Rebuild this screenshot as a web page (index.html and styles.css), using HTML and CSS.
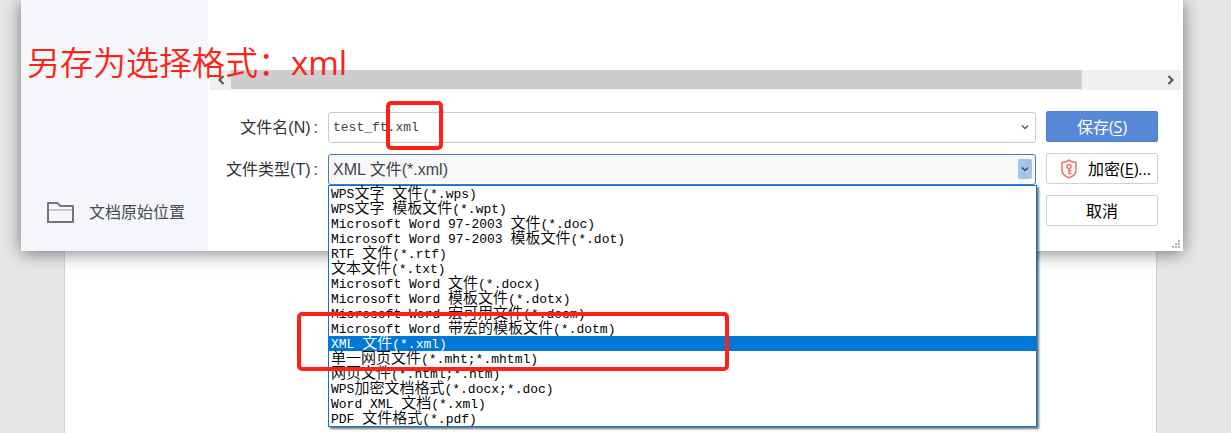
FILE: index.html
```html
<!DOCTYPE html>
<html lang="zh-CN">
<head>
<meta charset="utf-8">
<title>另存为</title>
<link rel="stylesheet" href="styles.css">
</head>
<body>
<main class="dialog">
  <aside class="sidebar">
    <a class="place" href="#">
      <svg class="folder" viewBox="0 0 28 24" width="28" height="24" aria-hidden="true">
        <path d="M1 21V2H10.500L13.500 5H26V21Z" fill="none" stroke="#747678" stroke-width="2" stroke-linejoin="round"/>
        <path d="M2 9H25" stroke="#b8babd" stroke-width="1.5"/>
      </svg>
      <span>文档原始位置</span>
    </a>
  </aside>
  <section class="content">
    <div class="scrollbar">
      <button class="scroll-btn" type="button" aria-label="向左滚动"><svg viewBox="0 0 8 10" width="8" height="10"><path d="M6.5 1L2.5 5L6.5 9" fill="none" stroke="#505050" stroke-width="2"/></svg></button>
      <div class="track"><div class="thumb"></div></div>
      <button class="scroll-btn" type="button" aria-label="向右滚动"><svg viewBox="0 0 8 10" width="8" height="10"><path d="M1.5 1L5.5 5L1.5 9" fill="none" stroke="#505050" stroke-width="2"/></svg></button>
    </div>
    <form class="form">
      <div class="fields">
        <label for="name">文件名(N)<span class="colon">:</span></label>
        <div class="control">
          <input class="box name" id="name" type="text" value="test_ft.xml">
          <span class="drop"><svg viewBox="0 0 8 6" width="8" height="6"><path d="M1 1.5L4 4.5L7 1.5" fill="none" stroke="#606060" stroke-width="1.5"/></svg></span>
          <span class="mark mark-name"></span>
        </div>
        <label for="type">文件类型(T)<span class="colon">:</span></label>
        <div class="control">
          <select class="box type" id="type"><option>XML 文件(*.xml)</option></select>
          <span class="drop active"><svg viewBox="0 0 8 6" width="8" height="6"><path d="M1 1.5L4 4.5L7 1.5" fill="none" stroke="#404850" stroke-width="1.5"/></svg></span>
          <ul class="menu" role="listbox" aria-label="文件类型">
            <li role="option">WPS<b>文字</b> <b>文件</b>(*.wps)</li>
            <li role="option">WPS<b>文字</b> <b>模板文件</b>(*.wpt)</li>
            <li role="option">Microsoft Word 97-2003 <b>文件</b>(*.doc)</li>
            <li role="option">Microsoft Word 97-2003 <b>模板文件</b>(*.dot)</li>
            <li role="option">RTF <b>文件</b>(*.rtf)</li>
            <li role="option"><b>文本文件</b>(*.txt)</li>
            <li role="option">Microsoft Word <b>文件</b>(*.docx)</li>
            <li role="option">Microsoft Word <b>模板文件</b>(*.dotx)</li>
            <li role="option">Microsoft Word <b>宏可用文件</b>(*.docm)</li>
            <li role="option">Microsoft Word <b>带宏的模板文件</b>(*.dotm)</li>
            <li role="option" class="selected" aria-selected="true">XML <b>文件</b>(*.xml)</li>
            <li role="option"><b>单一网页文件</b>(*.mht;*.mhtml)</li>
            <li role="option"><b>网页文件</b>(*.html;*.htm)</li>
            <li role="option">WPS<b>加密文档格式</b>(*.docx;*.doc)</li>
            <li role="option">Word XML <b>文档</b>(*.xml)</li>
            <li role="option">PDF <b>文件格式</b>(*.pdf)</li>
          </ul>
          <span class="mark mark-type"></span>
        </div>
      </div>
      <div class="actions">
        <button class="btn primary" type="button"><span>保存(<u>S</u>)</span></button>
        <button class="btn encrypt" type="button">
          <svg viewBox="0 0 16 20" width="16" height="20" aria-hidden="true" fill="none" stroke="#f0706c">
            <path d="M8 1.2C6 2.8 3.5 3.3 1 3.5V11C1 15 4 17.5 8 18.8C12 17.5 15 15 15 11V3.5C12.500 3.300 10 2.800 8 1.200Z" stroke-width="1.500"/>
            <circle cx="8" cy="7.500" r="2" stroke-width="1.500"/>
            <path d="M8 9.500V15.500M8 11.500H10.500M8 14.500H10.500" stroke-width="1.500"/>
          </svg>
          <span>加密(<u>E</u>)...</span>
        </button>
        <button class="btn" type="button"><span>取消</span></button>
      </div>
    </form>
    <svg class="grip" viewBox="0 0 8 8" width="8" height="8" fill="#b4b4b4" aria-hidden="true"><path d="M6 0h2v2h-2zM3 3h2v2h-2zM6 3h2v2h-2zM0 6h2v2h-2zM3 6h2v2h-2zM6 6h2v2h-2z"/></svg>
  </section>
  <p class="note">另存为选择格式：<span class="note-latin">xml</span></p>
</main>
<div class="sheet"></div>
</body>
</html>
```
FILE: styles.css
```css
* { box-sizing: border-box; }
body {
  margin: 0;
  min-height: 100vh;
  display: flex;
  flex-direction: column;
  overflow: hidden;
  background: #e7e7e7;
  color: #303238;
  font: 16px/20px "Liberation Sans", "Noto Sans CJK SC", sans-serif;
}
.dialog {
  position: relative;
  z-index: 1;
  display: flex;
  margin: 0 48px 0 21px;
  background: #fff;
  box-shadow: 0 2px 16px rgba(0, 0, 0, 0.5);
}
.sheet {
  flex: 1;
  margin: 0 75px 0 65px;
  background: #fff;
  box-shadow: 0 0 2px rgba(0, 0, 0, 0.25);
}
.sidebar {
  flex: 0 0 187px;
  display: flex;
  align-items: flex-end;
  padding: 0 0 26px 26px;
  background: #f5f6fa;
}
.place {
  display: flex;
  align-items: center;
  gap: 14px;
  color: #454b55;
  text-decoration: none;
}
.folder { display: block; }
.content { flex: 1; min-width: 0; padding-top: 70px; }
.scrollbar {
  display: flex;
  height: 20px;
  margin: 0 2px;
  background: #f0f0f0;
}
.scroll-btn {
  display: flex;
  align-items: center;
  justify-content: center;
  width: 21px;
  padding: 0;
  border: 0;
  background: transparent;
}
.track { flex: 1; }
.thumb { width: 91.6%; height: 19px; background: #cdcdcd; }
.form { display: flex; gap: 10px; padding: 21px 25px 0 0; }
.fields {
  flex: 1;
  display: grid;
  grid-template-columns: 110px 1fr;
  column-gap: 10px;
  row-gap: 11px;
  align-content: start;
  align-items: center;
  padding-top: 1px;
}
.fields label { text-align: right; white-space: nowrap; }
.colon { padding-left: 3px; }
.control { position: relative; }
.box {
  display: block;
  width: 100%;
  height: 31px;
  margin: 0;
  padding: 0 4px;
  border: 1px solid #c8c8c8;
  border-radius: 3px;
  background: #fff;
  color: #40444e;
  outline: 0;
  appearance: none;
}
.name { font: 13px/20px "Liberation Mono", monospace; }
.type {
  border-color: #4a78c0;
  background: #f8f8f8;
  font: 16px/20px "Liberation Sans", "Noto Sans CJK SC", sans-serif;
}
.drop {
  position: absolute;
  top: 5px;
  right: 4px;
  display: flex;
  align-items: center;
  justify-content: center;
  width: 14px;
  height: 20px;
  border-radius: 2px;
  pointer-events: none;
}
.drop.active { background: #a3c4e8; }
.menu {
  position: absolute;
  top: 100%;
  left: 0;
  right: -1px;
  margin: 0;
  padding: 0;
  border: 1px solid #0078d7;
  background: #fff;
  box-shadow: 2px 2px 2px rgba(0, 0, 0, 0.55);
  color: #000;
  font: 13px/11px "Liberation Mono", "Noto Sans CJK SC", monospace;
  list-style: none;
}
.menu li { height: 15px; padding-left: 2px; white-space: pre; }
.menu b { font: 350 15px/11px "Noto Sans CJK SC", sans-serif; }
.menu .selected { background: #0078d7; color: #fff; }
.actions {
  flex: 0 0 112px;
  display: flex;
  flex-direction: column;
  gap: 11px;
}
.btn {
  display: flex;
  align-items: center;
  justify-content: center;
  gap: 11px;
  height: 31px;
  padding: 0;
  border: 1px solid #d0d0d0;
  border-radius: 2px;
  background: #fff;
  color: #000;
  font: 16px/20px "Open Sans", "Noto Sans CJK SC", sans-serif;
  white-space: nowrap;
}
.btn u { text-underline-offset: 2px; }
.encrypt { padding-left: 8px; }
.primary { border-color: #4c82dc; background: #5788d8; color: #fff; }
.grip { display: block; margin: 14px 3px 3px auto; }
.note {
  position: absolute;
  top: 37px;
  left: 6px;
  margin: 0;
  color: #ff2213;
  font: 350 33px/48px "Noto Sans CJK SC", sans-serif;
  white-space: nowrap;
}
.note-latin { font-family: "Open Sans", sans-serif; font-weight: 400; }
.mark {
  position: absolute;
  z-index: 2;
  border: 4px solid #ff2213;
  border-radius: 5px;
  pointer-events: none;
}
.mark-name { top: -11px; left: 58px; width: 57px; height: 49px; }
.mark-type { top: 158px; left: -31px; width: 432px; height: 59px; }
```
